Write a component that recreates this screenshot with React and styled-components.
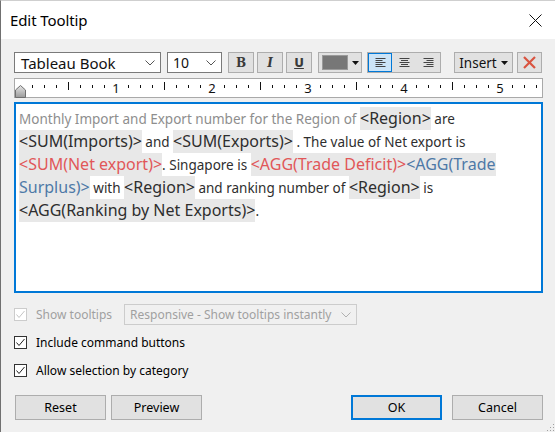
import React from 'react';
import styled, { createGlobalStyle } from 'styled-components';

const Global = createGlobalStyle`
  html, body { margin: 0; padding: 0; background: #f0f0f0; }
  body { font-family: "Noto Sans", "Open Sans", sans-serif; }
  * { box-sizing: border-box; }
`;

const Window = styled.div`
  position: relative;
  width: 555px;
  height: 432px;
  border-left: 1px solid #707070;
  border-top: 1px solid #cfcfcf;
  background: #f0f0f0;
  display: flex;
  flex-direction: column;
  overflow: hidden;
`;

const TitleBar = styled.div`
  height: 38px;
  flex: none;
  background: #fff;
  display: flex;
  align-items: center;
  justify-content: space-between;
  padding: 0 13px 0 9px;
`;

const Title = styled.span`
  font-size: 15px;
  color: #000;
  letter-spacing: -0.1px;
`;

const CloseIcon = styled.svg`
  width: 13px;
  height: 13px;
  display: block;
`;

const Body = styled.div`
  flex: 1;
  display: flex;
  flex-direction: column;
  padding: 13px 12px 0 13px;
`;

const Toolbar = styled.div`
  display: flex;
  align-items: stretch;
  height: 21px;
`;

const Select = styled.div`
  width: ${p => p.$w}px;
  margin-left: ${p => p.$ml || 0}px;
  height: 100%;
  background: ${p => (p.$disabled ? '#f0f0f0' : '#fff')};
  border: 1px solid ${p => (p.$disabled ? '#cccccc' : '#7a7a7a')};
  display: flex;
  align-items: center;
  justify-content: space-between;
  padding: 0 5px 0 ${p => p.$pl || 5}px;
  font-size: ${p => p.$fs || 15}px;
  color: ${p => (p.$disabled ? '#a0a0a0' : '#111')};
  white-space: nowrap;
`;

const Chevron = ({ color = '#555' }) => (
  <svg width="10" height="6" viewBox="0 0 10 6">
    <polyline points="0.5,0.5 5,5 9.5,0.5" fill="none" stroke={color} strokeWidth="1" />
  </svg>
);

const ToolButton = styled.div`
  width: ${p => p.$w}px;
  margin-left: ${p => p.$ml || 0}px;
  height: 100%;
  background: #e1e1e1;
  border: 1px solid #adadad;
  display: flex;
  align-items: center;
  justify-content: center;
  gap: 4px;
  color: #333;
`;

const StyleGlyph = styled.span`
  font-family: ${p => (p.$serif ? '"DejaVu Serif", "Liberation Serif", serif' : '"DejaVu Sans", "Liberation Sans", sans-serif')};
  font-weight: bold;
  font-style: ${p => (p.$italic ? 'italic' : 'normal')};
  text-decoration: ${p => (p.$under ? 'underline' : 'none')};
  font-size: 12px;
  color: #3a3a3a;
  line-height: 1;
`;

const Swatch = styled.span`
  width: 26px;
  height: 15px;
  background: #777777;
  border: 1px solid #9a9a9a;
`;

const Caret = () => (
  <svg width="7" height="4" viewBox="0 0 7 4">
    <polygon points="0,0 7,0 3.5,4" fill="#111" />
  </svg>
);

const AlignGroup = styled.div`
  width: 74px;
  margin-left: 5px;
  height: 100%;
  display: flex;
  border: 1px solid #adadad;
  background: #e1e1e1;
`;

const AlignBtn = styled.div`
  flex: 1;
  display: flex;
  align-items: center;
  justify-content: center;
  background: ${p => (p.$on ? '#cce4f7' : 'transparent')};
  outline: ${p => (p.$on ? '1px solid #0078d7' : 'none')};
  outline-offset: -1px;
`;

const AlignIcon = ({ mode }) => {
  const rows = [10, 7, 10, 7, 10];
  return (
    <svg width="11" height="9" viewBox="0 0 11 9">
      {rows.map((w, i) => {
        const x = mode === 'left' ? 0.5 : mode === 'right' ? 10.5 - w : (11 - w) / 2;
        return <line key={i} x1={x} x2={x + w} y1={i * 2 + 0.5} y2={i * 2 + 0.5} stroke="#444" strokeWidth="1" />;
      })}
    </svg>
  );
};

const InsertLabel = styled.span`
  font-size: 13.5px;
  color: #111;
`;

const Ruler = styled.div`
  position: relative;
  margin-top: 5px;
  height: 20px;
  background: #fff;
  border: 1px solid #a9a9a9;
`;

const RulerSvg = styled.svg`
  display: block;
`;

const Thumb = styled.svg`
  position: absolute;
  left: 0px;
  bottom: -1px;
`;

const Editor = styled.div`
  margin-top: 4px;
  height: 191px;
  background: #fff;
  border: 2px solid #0078d7;
  padding: 3px 3px 0 3px;
`;

const Line = styled.div`
  height: 23px;
  line-height: 23px;
  white-space: nowrap;
`;

const toneColor = { dark: '#2e2e2e', red: '#e15759', blue: '#4e79a7' };

const Field = styled.span`
  display: inline-block;
  height: 23px;
  line-height: 23px;
  background: #e8e8e8;
  font-size: 16px;
  color: ${p => toneColor[p.$tone || 'dark']};
`;

const Plain = styled.span`
  font-size: 13.5px;
  color: ${p => (p.$muted ? '#8e8e8e' : '#2e2e2e')};
  white-space: pre;
`;

const Options = styled.div`
  display: flex;
  flex-direction: column;
  margin-top: 11px;
`;

const OptionRow = styled.div`
  display: flex;
  align-items: center;
  height: ${p => p.$h || 14}px;
  margin-top: ${p => p.$mt || 0}px;
`;

const Box = styled.span`
  width: 13px;
  height: 13px;
  flex: none;
  border: 1px solid ${p => (p.$disabled ? '#cccccc' : '#333')};
  background: #fff;
  display: flex;
  align-items: center;
  justify-content: center;
`;

const Label = styled.span`
  margin-left: 9px;
  font-size: 12px;
  color: ${p => (p.$disabled ? '#a0a0a0' : '#000')};
`;

const Check = ({ disabled }) => (
  <Box $disabled={disabled}>
    <svg width="11" height="11" viewBox="0 0 11 11">
      <polyline points="1.5,5.5 4,8.5 9.5,2" fill="none" stroke={disabled ? '#c4c4c4' : '#222'} strokeWidth="1" />
    </svg>
  </Box>
);

const Buttons = styled.div`
  display: flex;
  justify-content: space-between;
  margin-top: 18px;
  padding-left: 1px;
`;

const Group = styled.div`
  display: flex;
  gap: ${p => p.$gap}px;
`;

const Button = styled.div`
  width: 91px;
  height: 25px;
  background: #e1e1e1;
  border: ${p => (p.$primary ? '2px solid #0078d7' : '1px solid #adadad')};
  display: flex;
  align-items: center;
  justify-content: center;
  font-size: 12.5px;
  color: #000;
`;

const Grip = styled.svg`
  position: absolute;
  right: 0;
  bottom: 0;
`;

function RulerMarks() {
  const items = [];
  for (let k = 1; k <= 43; k++) {
    const x = 5 + 12 * k;
    if (k % 8 === 0) {
      items.push(
        <text key={k} x={x} y={14} textAnchor="middle" fontSize="13" fill="#111" fontFamily='"Noto Sans", sans-serif'>
          {k / 8}
        </text>
      );
    } else if (k % 4 === 0) {
      items.push(<line key={k} x1={x} x2={x} y1={3} y2={11} stroke="#111" strokeWidth="1" />);
    } else {
      items.push(<line key={k} x1={x} x2={x} y1={6} y2={9} stroke="#111" strokeWidth="1" />);
    }
  }
  return (
    <RulerSvg width="526" height="18" viewBox="0 0 526 18" shapeRendering="crispEdges">
      {items}
    </RulerSvg>
  );
}

export default function App() {
  return (
    <>
      <Global />
      <Window>
        <TitleBar>
          <Title>Edit Tooltip</Title>
          <CloseIcon viewBox="0 0 13 13">
            <line x1="0.5" y1="0.5" x2="12.5" y2="12.5" stroke="#111" strokeWidth="1" />
            <line x1="12.5" y1="0.5" x2="0.5" y2="12.5" stroke="#111" strokeWidth="1" />
          </CloseIcon>
        </TitleBar>
        <Body>
          <Toolbar>
            <Select $w={147} $pl={6}>
              <span>Tableau Book</span>
              <Chevron />
            </Select>
            <Select $w={55} $ml={6} $fs={14}>
              <span>10</span>
              <Chevron />
            </Select>
            <ToolButton $w={26} $ml={6}>
              <StyleGlyph $serif>B</StyleGlyph>
            </ToolButton>
            <ToolButton $w={26} $ml={3}>
              <StyleGlyph $serif $italic>I</StyleGlyph>
            </ToolButton>
            <ToolButton $w={26} $ml={3}>
              <StyleGlyph $under>U</StyleGlyph>
            </ToolButton>
            <ToolButton $w={44} $ml={6}>
              <Swatch />
              <Caret />
            </ToolButton>
            <AlignGroup>
              <AlignBtn $on>
                <AlignIcon mode="left" />
              </AlignBtn>
              <AlignBtn>
                <AlignIcon mode="center" />
              </AlignBtn>
              <AlignBtn>
                <AlignIcon mode="right" />
              </AlignBtn>
            </AlignGroup>
            <ToolButton $w={59} $ml={13}>
              <InsertLabel>Insert</InsertLabel>
              <Caret />
            </ToolButton>
            <ToolButton $w={25} $ml={4}>
              <svg width="13" height="13" viewBox="0 0 13 13">
                <line x1="1" y1="1" x2="12" y2="12" stroke="#d9533f" strokeWidth="2.2" />
                <line x1="12" y1="1" x2="1" y2="12" stroke="#d9533f" strokeWidth="2.2" />
              </svg>
            </ToolButton>
          </Toolbar>

          <Ruler>
            <RulerMarks />
            <Thumb width="12" height="13" viewBox="0 0 12 13">
              <defs>
                <linearGradient id="tg" x1="0" y1="0" x2="0" y2="1">
                  <stop offset="0" stopColor="#e6e6e6" />
                  <stop offset="1" stopColor="#9a9a9a" />
                </linearGradient>
              </defs>
              <polygon points="0.5,12.5 0.5,5 5.5,0.5 10.5,5 10.5,12.5" fill="url(#tg)" stroke="#6f6f6f" strokeWidth="1" />
            </Thumb>
          </Ruler>

          <Editor>
            <Line>
              <Plain $muted>Monthly Import and Export number for the Region of </Plain>
              <Field>&lt;Region&gt;</Field>
              <Plain> are</Plain>
            </Line>
            <Line>
              <Field>&lt;SUM(Imports)&gt;</Field>
              <Plain> and </Plain>
              <Field>&lt;SUM(Exports)&gt;</Field>
              <Plain> . The value of Net export is</Plain>
            </Line>
            <Line>
              <Field $tone="red">&lt;SUM(Net export)&gt;</Field>
              <Plain>. Singapore is </Plain>
              <Field $tone="red">&lt;AGG(Trade Deficit)&gt;</Field>
              <Field $tone="blue">&lt;AGG(Trade</Field>
            </Line>
            <Line>
              <Field $tone="blue">Surplus)&gt;</Field>
              <Plain> with </Plain>
              <Field>&lt;Region&gt;</Field>
              <Plain> and ranking number of </Plain>
              <Field>&lt;Region&gt;</Field>
              <Plain> is</Plain>
            </Line>
            <Line>
              <Field>&lt;AGG(Ranking by Net Exports)&gt;</Field>
              <Plain>.</Plain>
            </Line>
          </Editor>

          <Options>
            <OptionRow $h={21}>
              <Check disabled />
              <Label $disabled>Show tooltips</Label>
              <Select $w={233} $ml={12} $fs={12} $disabled>
                <span>Responsive - Show tooltips instantly</span>
                <Chevron color="#b0b0b0" />
              </Select>
            </OptionRow>
            <OptionRow $mt={10}>
              <Check />
              <Label>Include command buttons</Label>
            </OptionRow>
            <OptionRow $mt={14}>
              <Check />
              <Label>Allow selection by category</Label>
            </OptionRow>
          </Options>

          <Buttons>
            <Group $gap={5}>
              <Button>Reset</Button>
              <Button>Preview</Button>
            </Group>
            <Group $gap={10}>
              <Button $primary>OK</Button>
              <Button>Cancel</Button>
            </Group>
          </Buttons>
        </Body>
        <Grip width="10" height="10" viewBox="0 0 10 10">
          {[[8, 2], [8, 5], [5, 5], [8, 8], [5, 8], [2, 8]].map(([x, y], i) => (
            <rect key={i} x={x} y={y} width="1" height="1" fill="#a0a0a0" />
          ))}
        </Grip>
      </Window>
    </>
  );
}
